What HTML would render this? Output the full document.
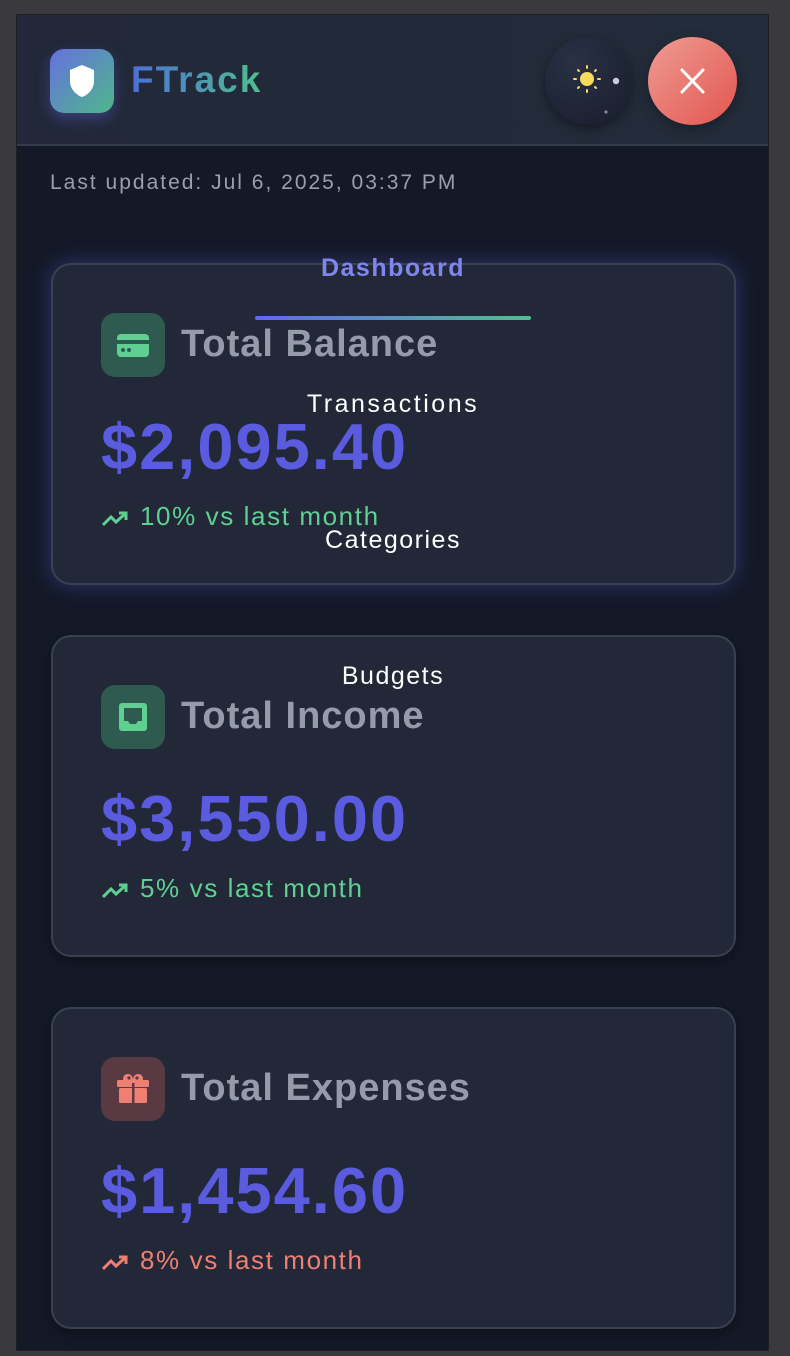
<!DOCTYPE html>
<html><head><meta charset="utf-8"><style>
*{box-sizing:border-box;margin:0;padding:0}
body{width:790px;height:1356px;background:#3a3a3e;font-family:"Liberation Sans",sans-serif;position:relative;overflow:hidden}
.frame{position:absolute;left:16px;top:14px;width:753px;height:1337px;background:#131927;border:1px solid #1e1f22}
.hdr{position:absolute;left:0;top:0;width:751px;height:131px;background:linear-gradient(90deg,#222839,#232c3a);border-bottom:2px solid #343b4b}
.logo{position:absolute;left:33px;top:34px;width:64px;height:64px;border-radius:14px;background:linear-gradient(135deg,#6570e0,#4fb889);box-shadow:0 6px 14px rgba(99,102,241,.35)}
.brand{position:absolute;left:114px;top:44px;font-size:37px;font-weight:bold;letter-spacing:2px;background:linear-gradient(90deg,#4c6fd6,#4fc08d);-webkit-background-clip:text;color:transparent}
.theme{position:absolute;left:528px;top:22px;width:87px;height:88px;border-radius:50%;background:radial-gradient(circle at 35% 30%,#2a3146,#171c2b);box-shadow:0 4px 10px rgba(0,0,0,.4)}
.close{position:absolute;left:631px;top:22px;width:89px;height:88px;border-radius:50%;background:linear-gradient(135deg,#ee9c94,#e2564f);box-shadow:0 4px 12px rgba(0,0,0,.3)}
.upd{position:absolute;left:33px;top:156px;font-size:21px;letter-spacing:2px;color:#9aa0ab}
.card{position:absolute;left:34px;width:685px;height:322px;border-radius:20px;background:#222837;border:2px solid #394051;box-shadow:0 4px 12px rgba(0,0,0,.35)}
.card.glow{box-shadow:0 0 22px rgba(99,102,241,.35)}
.ic{position:absolute;left:48px;top:48px;width:64px;height:64px;border-radius:14px}
.ttl{position:absolute;left:128px;top:58px;font-size:38px;font-weight:bold;letter-spacing:1px;color:#959baa}
.amt{position:absolute;left:48px;top:144px;font-size:65px;font-weight:bold;color:#5b5be0;letter-spacing:2px}
.chg{position:absolute;left:49px;top:236px;font-size:26px;letter-spacing:1.6px}
.chg svg{vertical-align:-2px;margin-right:12px}
.nav{position:absolute;font-size:25px;color:#fff;width:300px;text-align:center;left:226px;letter-spacing:1.5px}
</style></head><body>
<div class="frame">
 <div class="hdr">
  <div class="logo"><svg width="64" height="64" viewBox="0 0 64 64"><path d="M32 16 L44 21 V32 C44 40 38 46 32 48 C26 46 20 40 20 32 V21 Z" fill="#fff"/></svg></div>
  <div class="brand">FTrack</div>
  <div class="theme"><svg width="87" height="88" viewBox="0 0 87 88">
   <circle cx="42" cy="42" r="7" fill="#f8da5c"/>
   <g stroke="#f8da5c" stroke-width="2" stroke-linecap="round"><line x1="42" y1="29" x2="42" y2="31"/><line x1="42" y1="53" x2="42" y2="55"/><line x1="29" y1="42" x2="31" y2="42"/><line x1="53" y1="42" x2="55" y2="42"/><line x1="33" y1="33" x2="34" y2="34"/><line x1="50" y1="50" x2="51" y2="51"/><line x1="33" y1="51" x2="34" y2="50"/><line x1="50" y1="34" x2="51" y2="33"/></g>
   <circle cx="71" cy="44" r="3.2" fill="#ccd"/><circle cx="61" cy="75" r="1.6" fill="#889"/></svg></div>
  <div class="close"><svg width="89" height="88" viewBox="0 0 89 88"><path d="M34 33 L55 55 M55 33 L34 55" stroke="#fff" stroke-width="3" stroke-linecap="round"/></svg></div>
 </div>
 <div class="upd">Last updated: Jul 6, 2025, 03:37 PM</div>

 <div class="card glow" style="top:248px">
  <div class="ic" style="background:#2f5a50"><svg width="64" height="64" viewBox="0 0 64 64"><rect x="16" y="21" width="32" height="23" rx="4" fill="#5fcf92"/><rect x="16" y="27" width="32" height="4" fill="#2f5a50"/><circle cx="22" cy="37" r="2" fill="#2f5a50"/><circle cx="28" cy="37" r="2" fill="#2f5a50"/></svg></div>
  <div class="ttl">Total Balance</div>
  <div class="amt">$2,095.40</div>
  <div class="chg" style="color:#5fcf92"><svg width="26" height="16" viewBox="0 0 26 16"><path d="M1 14 L9 6 L14 11 L24 2 M17 2 H24 V9" stroke="#5fcf92" stroke-width="3" fill="none"/></svg>10% vs last month</div>
 </div>

 <div class="card" style="top:620px">
  <div class="ic" style="background:#2f5a50"><svg width="64" height="64" viewBox="0 0 64 64"><rect x="18" y="18" width="28" height="28" rx="3" fill="#5fcf92"/><path d="M23 23 H41 V36 H37 L35 39 H29 L27 36 H23 Z" fill="#2f5a50"/></svg></div>
  <div class="ttl">Total Income</div>
  <div class="amt">$3,550.00</div>
  <div class="chg" style="color:#5fcf92"><svg width="26" height="16" viewBox="0 0 26 16"><path d="M1 14 L9 6 L14 11 L24 2 M17 2 H24 V9" stroke="#5fcf92" stroke-width="3" fill="none"/></svg>5% vs last month</div>
 </div>

 <div class="card" style="top:992px">
  <div class="ic" style="background:#5a3a42"><svg width="64" height="64" viewBox="0 0 64 64"><path d="M22 23 Q22 17 27 17 Q31 17 32 22 Q33 17 37 17 Q42 17 42 23 Z" fill="#ef7f73"/><circle cx="28" cy="21" r="1.6" fill="#5a3a42"/><circle cx="36" cy="21" r="1.6" fill="#5a3a42"/><rect x="16" y="23" width="32" height="7" rx="1.5" fill="#ef7f73"/><rect x="18" y="31" width="28" height="15" rx="1.5" fill="#ef7f73"/><rect x="31" y="26" width="2.5" height="20" fill="#5a3a42"/></svg></div>
  <div class="ttl">Total Expenses</div>
  <div class="amt">$1,454.60</div>
  <div class="chg" style="color:#ef7f73"><svg width="26" height="16" viewBox="0 0 26 16"><path d="M1 14 L9 6 L14 11 L24 2 M17 2 H24 V9" stroke="#ef7f73" stroke-width="3" fill="none"/></svg>8% vs last month</div>
 </div>

 <div class="nav" style="top:239px;color:#7f86ee;font-weight:bold">Dashboard</div>
 <div style="position:absolute;left:238px;top:301px;width:276px;height:4px;border-radius:2px;background:linear-gradient(90deg,#6366f1,#4fc08d)"></div>
 <div class="nav" style="top:375px;letter-spacing:2.5px">Transactions</div>
 <div class="nav" style="top:511px">Categories</div>
 <div class="nav" style="top:647px">Budgets</div>
</div>
</body></html>
